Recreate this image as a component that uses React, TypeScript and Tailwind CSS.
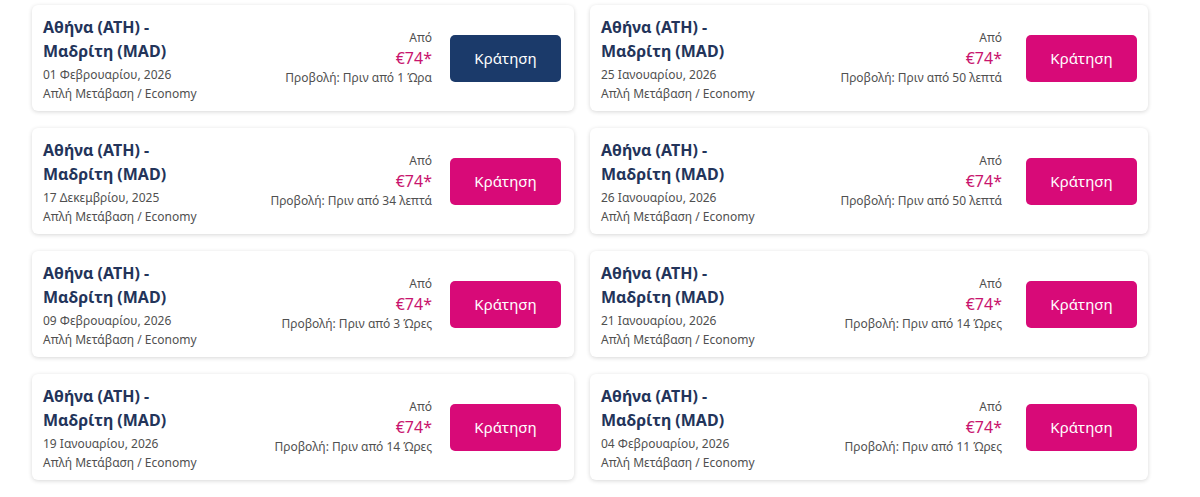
import React from "react";

type Item = { date: string; view: string; dark?: boolean };

const left: Item[] = [
  { date: "01 Φεβρουαρίου, 2026", view: "Προβολή: Πριν από 1 Ώρα", dark: true },
  { date: "17 Δεκεμβρίου, 2025", view: "Προβολή: Πριν από 34 λεπτά" },
  { date: "09 Φεβρουαρίου, 2026", view: "Προβολή: Πριν από 3 Ώρες" },
  { date: "19 Ιανουαρίου, 2026", view: "Προβολή: Πριν από 14 Ώρες" },
];
const right: Item[] = [
  { date: "25 Ιανουαρίου, 2026", view: "Προβολή: Πριν από 50 λεπτά" },
  { date: "26 Ιανουαρίου, 2026", view: "Προβολή: Πριν από 50 λεπτά" },
  { date: "21 Ιανουαρίου, 2026", view: "Προβολή: Πριν από 14 Ώρες" },
  { date: "04 Φεβρουαρίου, 2026", view: "Προβολή: Πριν από 11 Ώρες" },
];

function Card({ item, side }: { item: Item; side: "l" | "r" }) {
  return (
    <div
      className={
        "h-[106px] bg-white rounded-md shadow-[0_1px_4px_rgba(0,0,0,0.16)] flex items-center justify-between pl-[11px] " +
        (side === "l" ? "pr-[13px]" : "pr-[11px]")
      }
    >
      <div className="flex flex-col pt-[1px]">
        <div className="text-[16px] leading-[24px] font-bold text-[#23345a]">Αθήνα (ATH) -</div>
        <div className="text-[16px] leading-[24px] font-bold text-[#23345a]">Μαδρίτη (MAD)</div>
        <div className="text-[12px] leading-[19px] text-[#505050] mt-[2px]">{item.date}</div>
        <div className="text-[12px] leading-[19px] text-[#505050]">Απλή Μετάβαση / Economy</div>
      </div>
      <div className={"flex items-center " + (side === "l" ? "gap-[18px]" : "gap-[24px]")}>
        <div className="flex flex-col items-end">
          <div className="text-[12px] leading-[18px] text-[#505050]">Από</div>
          <div className="text-[16px] leading-[22px] text-[#c8146e]">€74*</div>
          <div className="text-[12px] leading-[18px] text-[#505050]">{item.view}</div>
        </div>
        <button
          className={
            "w-[111px] h-[47px] rounded-[5px] text-white text-[15px] " +
            (item.dark ? "bg-[#1b3a6a]" : "bg-[#d80a78]")
          }
        >
          Κράτηση
        </button>
      </div>
    </div>
  );
}

export default function App() {
  return (
    <div
      className="w-[1200px] h-[497px] bg-white pl-[32px] pt-[5px]"
      style={{ fontFamily: '"Noto Sans", "Open Sans", sans-serif' }}
    >
      <div className="grid grid-cols-[542px_558px] gap-x-[16px] gap-y-[17px]">
        {left.map((l, i) => (
          <React.Fragment key={i}>
            <Card item={l} side="l" />
            <Card item={right[i]} side="r" />
          </React.Fragment>
        ))}
      </div>
    </div>
  );
}
